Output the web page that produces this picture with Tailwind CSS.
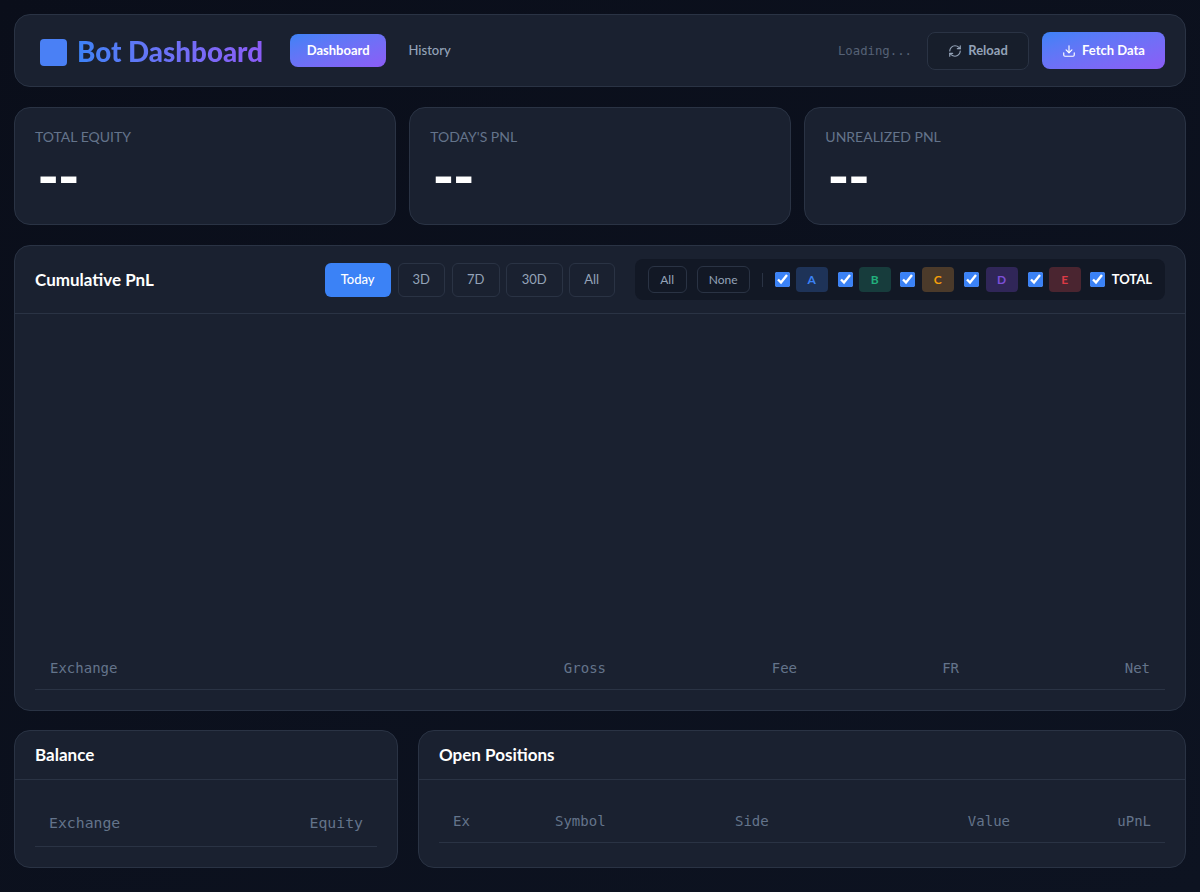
<!DOCTYPE html>
<html lang="en">
<head>
<meta charset="utf-8">
<title>Bot Dashboard</title>
<script src="https://cdn.jsdelivr.net/npm/@tailwindcss/browser@4"></script>
</head>
<body class="bg-gradient-to-br from-[#0a0e1a] to-[#0d1321] font-['Lato',sans-serif] text-white">
<div class="h-[892px] overflow-hidden p-[14px] flex flex-col">

  <header class="h-[73px] shrink-0 rounded-2xl border border-[#2a3344] bg-[#1a2130] pl-[25px] pr-5 flex items-center">
    <div class="mt-[3px] w-[27px] h-[27px] rounded bg-[#4a80f5]"></div>
    <h1 class="mt-[2px] ml-[10px] text-[27.75px] font-black leading-none bg-gradient-to-r from-[#3b82f6] to-[#8b5cf6] bg-clip-text text-transparent">Bot Dashboard</h1>
    <nav class="ml-[27px] flex items-center gap-[8px]">
      <a class="pt-[1px] w-[96px] h-[33px] rounded-lg bg-gradient-to-br from-[#3b82f6] to-[#8b5cf6] flex items-center justify-center text-[13px] font-bold text-white">Dashboard</a>
      <a class="pt-[1px] w-[71px] h-[33px] rounded-lg flex items-center justify-center text-[13px] font-medium text-[#94a3b8]">History</a>
    </nav>
    <div class="ml-auto flex items-center">
      <span class="pt-[2px] font-['DejaVu_Sans_Mono',monospace] text-[12.3px] text-[#566276]">Loading...</span>
      <button class="ml-[15px] w-[102px] h-[38px] rounded-lg border border-[#2a3344] bg-[#171e2b] flex items-center justify-center gap-[6px] text-[13px] font-bold text-[#94a3b8]">
        <svg class="w-[14px] h-[14px]" viewBox="0 0 24 24" fill="none" stroke="currentColor" stroke-width="2" stroke-linecap="round" stroke-linejoin="round"><path d="M3 12a9 9 0 0 1 9-9 9.75 9.75 0 0 1 6.74 2.74L21 8"/><path d="M21 3v5h-5"/><path d="M21 12a9 9 0 0 1-9 9 9.75 9.75 0 0 1-6.74-2.74L3 16"/><path d="M8 16H3v5"/></svg>
        <span class="pt-[1px]">Reload</span>
      </button>
      <button class="ml-[13px] w-[123px] h-[37px] rounded-lg bg-gradient-to-br from-[#3b82f6] to-[#8b5cf6] flex items-center justify-center gap-[6px] text-[13px] font-bold text-white">
        <svg class="w-[14px] h-[14px]" viewBox="0 0 24 24" fill="none" stroke="currentColor" stroke-width="2" stroke-linecap="round" stroke-linejoin="round"><path d="M21 15v4a2 2 0 0 1-2 2H5a2 2 0 0 1-2-2v-4"/><path d="M7 10l5 5 5-5"/><path d="M12 15V3"/></svg>
        <span class="pt-[1px]">Fetch Data</span>
      </button>
    </div>
  </header>

  <section class="mt-5 h-[118px] shrink-0 grid grid-cols-3 gap-[13.5px]">
    <div class="rounded-2xl border border-[#2a3344] bg-[#1a2130] px-5 pt-[20px]">
      <div class="text-[14px] leading-[18px] uppercase text-[#64748b]">Total Equity</div>
      <div class="mt-[14px] -ml-[3px] h-[40px] font-['Liberation_Mono',monospace] text-[54px] leading-[40px] tracking-[-12px] font-bold text-white">--</div>
    </div>
    <div class="rounded-2xl border border-[#2a3344] bg-[#1a2130] px-5 pt-[20px]">
      <div class="text-[14px] leading-[18px] uppercase text-[#64748b]">Today's PnL</div>
      <div class="mt-[14px] -ml-[3px] h-[40px] font-['Liberation_Mono',monospace] text-[54px] leading-[40px] tracking-[-12px] font-bold text-white">--</div>
    </div>
    <div class="rounded-2xl border border-[#2a3344] bg-[#1a2130] px-5 pt-[20px]">
      <div class="text-[14px] leading-[18px] uppercase text-[#64748b]">Unrealized PnL</div>
      <div class="mt-[14px] -ml-[3px] h-[40px] font-['Liberation_Mono',monospace] text-[54px] leading-[40px] tracking-[-12px] font-bold text-white">--</div>
    </div>
  </section>

  <section class="mt-5 h-[466px] shrink-0 rounded-2xl border border-[#2a3344] bg-[#1a2130] flex flex-col">
    <div class="h-[68px] shrink-0 border-b border-[#2a3344] pl-5 pr-5 flex items-center">
      <h2 class="pt-[1px] text-[17px] font-bold text-white">Cumulative PnL</h2>
      <div class="ml-auto flex items-center">
        <button class="pt-[1px] w-[66px] h-[34px] rounded-md bg-[#3b82f6] text-[13px] font-medium text-white">Today</button>
        <button class="ml-[7px] pt-[1px] w-[47px] h-[34px] rounded-md border border-[#2a3344] text-[13px] text-[#94a3b8]">3D</button>
        <button class="ml-[7px] pt-[1px] w-[48px] h-[34px] rounded-md border border-[#2a3344] text-[13px] text-[#94a3b8]">7D</button>
        <button class="ml-[6px] pt-[1px] w-[57px] h-[34px] rounded-md border border-[#2a3344] text-[13px] text-[#94a3b8]">30D</button>
        <button class="ml-[6px] pt-[1px] w-[46px] h-[34px] rounded-md border border-[#2a3344] text-[13px] text-[#94a3b8]">All</button>
      </div>
      <div class="ml-[20px] h-[41px] rounded-lg bg-[#121825] px-[13px] flex items-center">
        <button class="w-[39px] h-[27px] rounded-md border border-[#2a3344] text-[12px] text-[#94a3b8]">All</button>
        <button class="ml-[10px] w-[53px] h-[27px] rounded-md border border-[#2a3344] text-[12px] text-[#94a3b8]">None</button>
        <span class="ml-[12px] w-px h-[14px] bg-[#2a3344]"></span>
        <input type="checkbox" checked class="ml-[12px] w-[15px] h-[15px] m-0 accent-[#3b82f6]">
        <span class="ml-[6px] w-[32px] h-[25px] rounded bg-[#1e3358] flex items-center justify-center text-[12px] font-bold text-[#3b82f6]">A</span>
        <input type="checkbox" checked class="ml-[10px] w-[15px] h-[15px] m-0 accent-[#3b82f6]">
        <span class="ml-[6px] w-[32px] h-[25px] rounded bg-[#173c3c] flex items-center justify-center text-[12px] font-bold text-[#22b07d]">B</span>
        <input type="checkbox" checked class="ml-[9px] w-[15px] h-[15px] m-0 accent-[#3b82f6]">
        <span class="ml-[7px] w-[32px] h-[25px] rounded bg-[#4b3a2a] flex items-center justify-center text-[12px] font-bold text-[#f59e0b]">C</span>
        <input type="checkbox" checked class="ml-[10px] w-[15px] h-[15px] m-0 accent-[#3b82f6]">
        <span class="ml-[7px] w-[32px] h-[25px] rounded bg-[#302658] flex items-center justify-center text-[12px] font-bold text-[#7c4fd8]">D</span>
        <input type="checkbox" checked class="ml-[10px] w-[15px] h-[15px] m-0 accent-[#3b82f6]">
        <span class="ml-[6px] w-[32px] h-[25px] rounded bg-[#4a2530] flex items-center justify-center text-[12px] font-bold text-[#dc3a45]">E</span>
        <input type="checkbox" checked class="ml-[9px] w-[15px] h-[15px] m-0 accent-[#3b82f6]">
        <span class="ml-[7px] text-[13px] font-bold text-white">TOTAL</span>
      </div>
    </div>
    <div class="flex-1"></div>
    <div class="mx-5 mb-[20px] h-[44px] pt-[2px] border-b border-[#2a3344] grid grid-cols-[395px_191px_191px_162px_191px] items-center font-['DejaVu_Sans_Mono',monospace] text-[14px] text-[#64748b]">
      <span class="pl-[15px]">Exchange</span>
      <span class="pr-[15px] text-right">Gross</span>
      <span class="pr-[15px] text-right">Fee</span>
      <span class="pr-[15px] text-right">FR</span>
      <span class="pr-[15px] text-right">Net</span>
    </div>
  </section>

  <section class="mt-[19px] h-[138px] shrink-0 grid grid-cols-[384px_768px] gap-5">
    <div class="rounded-2xl border border-[#2a3344] bg-[#1a2130] flex flex-col">
      <div class="h-[49px] shrink-0 border-b border-[#2a3344] px-5 flex items-center"><h2 class="text-[17px] font-bold text-white">Balance</h2></div>
      <div class="mx-5 mt-[20px] h-[47px] pt-[1px] border-b border-[#2a3344] flex items-center justify-between px-[14px] font-['DejaVu_Sans_Mono',monospace] text-[14.8px] text-[#64748b]">
        <span>Exchange</span><span>Equity</span>
      </div>
    </div>
    <div class="rounded-2xl border border-[#2a3344] bg-[#1a2130] flex flex-col">
      <div class="h-[49px] shrink-0 border-b border-[#2a3344] px-5 flex items-center"><h2 class="text-[17px] font-bold text-white">Open Positions</h2></div>
      <div class="mx-5 mt-[20px] h-[43px] pt-[1px] border-b border-[#2a3344] grid grid-cols-[102px_180px_303px_141px] items-center font-['DejaVu_Sans_Mono',monospace] text-[14px] text-[#64748b]">
        <span class="pl-[14px]">Ex</span>
        <span class="pl-[14px]">Symbol</span>
        <div class="pl-[14px] pr-[14px] flex justify-between"><span>Side</span><span>Value</span></div>
        <span class="pr-[14px] text-right">uPnL</span>
      </div>
    </div>
  </section>
</div>
</body>
</html>
